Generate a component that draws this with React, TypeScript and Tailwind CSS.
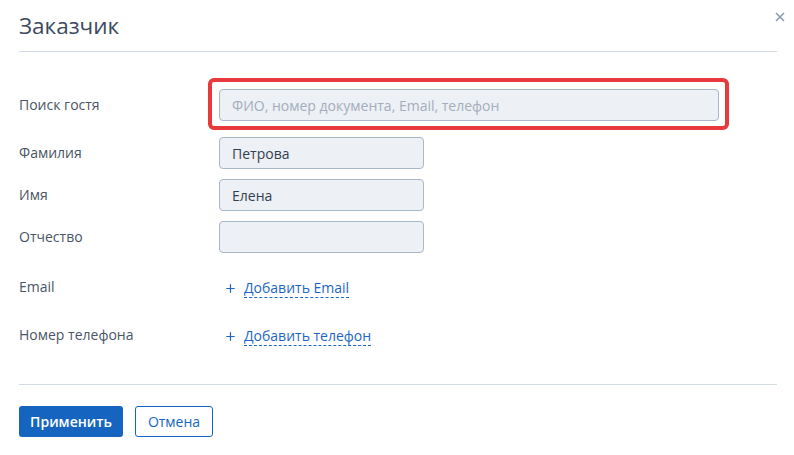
import { Plus } from "lucide-react";

function Field({ value }: { value?: string }) {
  return (
    <div className="flex h-8 w-[205px] items-center rounded-[4px] border border-[#a9b7cb] bg-[#edf0f4] px-[12px] text-[14px] text-[#33404f]">
      {value}
    </div>
  );
}

function AddLink({ label }: { label: string }) {
  return (
    <div className="flex items-center gap-[7px] pl-[5px] text-[14px] text-[#1e66c4]">
      <Plus size={13} strokeWidth={2.2} />
      <span className="border-b border-dashed border-[#1e66c4] leading-[18px]">{label}</span>
    </div>
  );
}

export default function App() {
  return (
    <div
      className="h-[455px] w-[794px] bg-white pl-[19px] pr-[17px] text-[#4a5565]"
      style={{ fontFamily: '"Open Sans", "Liberation Sans", sans-serif' }}
    >
      {/* header */}
      <div className="relative flex h-[52px] items-center border-b border-[#d3dbe7]">
        <h1 className="text-[22.5px] font-normal text-[#3b4a60]">Заказчик</h1>
        <svg
          viewBox="0 0 10 10"
          className="absolute right-[-8px] top-[12px] h-[10px] w-[10px] text-[#8798b4]"
          fill="none"
          stroke="currentColor"
          strokeWidth="1.5"
        >
          <path d="M1 1 9 9M9 1 1 9" />
        </svg>
      </div>

      {/* form */}
      <div className="pt-[26px] text-[14px]">
        <div className="flex items-center">
          <div className="w-[189px]">Поиск гостя</div>
          <div className="h-[52px] w-[521px] rounded-[6px] border-[4px] border-[#e8393b] pl-[7px] pt-[7px]">
            <div className="flex h-8 w-[500px] items-center rounded-[4px] border border-[#a9b7cb] bg-[#edf0f4] px-[12px] text-[14px] text-[#a3aebd]">
              ФИО, номер документа, Email, телефон
            </div>
          </div>
        </div>

        <div className="mt-[7px] flex flex-col gap-[10px]">
          <div className="flex items-center">
            <div className="w-[200px] -translate-y-[1px]">Фамилия</div>
            <Field value="Петрова" />
          </div>
          <div className="flex items-center">
            <div className="w-[200px] -translate-y-[1px]">Имя</div>
            <Field value="Елена" />
          </div>
          <div className="flex items-center">
            <div className="w-[200px] -translate-y-[1px]">Отчество</div>
            <Field />
          </div>
        </div>

        <div className="flex h-[48px] items-center pt-[22px]">
          <div className="w-[200px] -translate-y-[2px]">Email</div>
          <AddLink label="Добавить Email" />
        </div>
        <div className="flex h-[48px] items-center pt-[22px]">
          <div className="w-[200px] -translate-y-[2px]">Номер телефона</div>
          <AddLink label="Добавить телефон" />
        </div>
      </div>

      {/* footer */}
      <div className="mt-[35px] flex gap-[12px] border-t border-[#d3dbe7] pt-[21px]">
        <button className="h-[31px] w-[104px] rounded-[3px] bg-[#1565c0] text-[14px] font-semibold text-white">
          Применить
        </button>
        <button className="h-[31px] w-[78px] rounded-[3px] border border-[#1565c0] bg-white text-[14px] text-[#1565c0]">
          Отмена
        </button>
      </div>
    </div>
  );
}
